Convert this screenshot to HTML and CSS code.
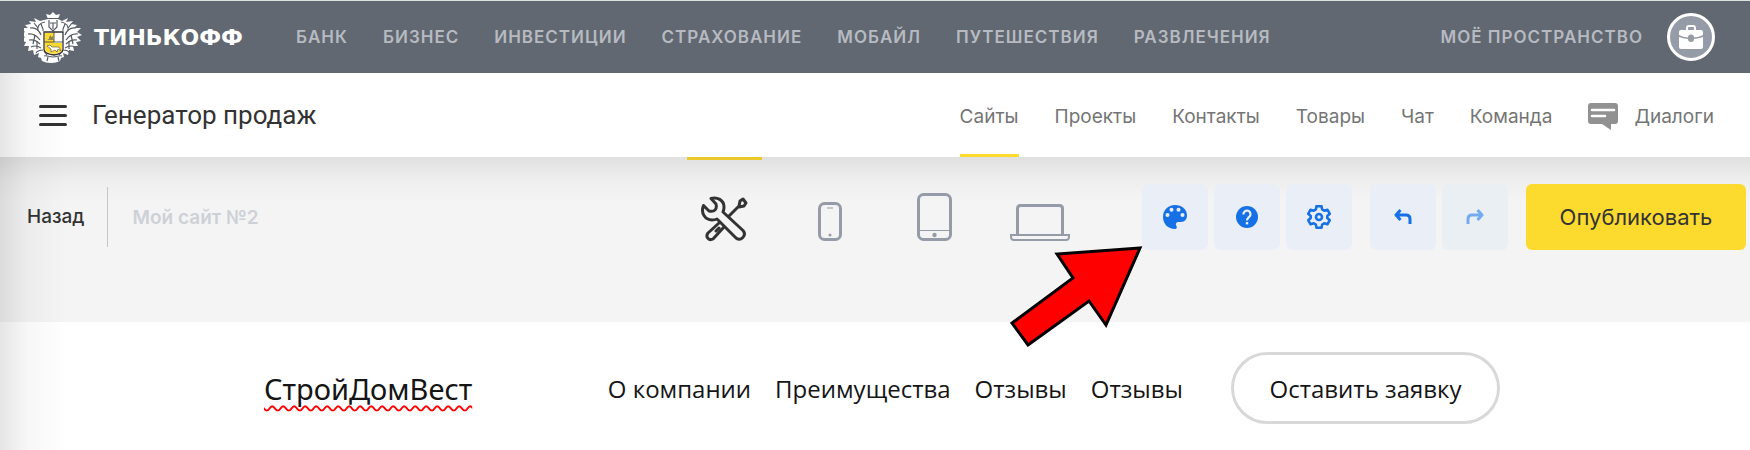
FILE: index.html
```html
<!DOCTYPE html>
<html lang="ru">
<head>
  <meta charset="UTF-8">
  <title>Генератор продаж</title>
  <link rel="stylesheet" href="styles.css">
</head>
<body>
  <!-- шапка -->
  <header class="topbar">
    <a class="brand" href="#">
      <svg class="crest" viewBox="0 0 58 52" aria-hidden="true">
        <!-- намёт и лента -->
        <path fill="#fff" d="M24 8 22 3l4 1 3-3 3 3 4-1-2 5 4 2 6-3-2 4 7-1-2 3 6 1-3 3 7 0-4 4 5 3-5 2 4 4-5 1 2 4-5 0 1 5-5-1-1 5-5-2 1 4-3 1-1 3c-3 1-5 2-9 2s-6-1-9-2l-1-3-3-1 1-4-5 2-1-5-5 1 1-5-5 0 2-4-5-1 4-4-5-2 5-3-4-4 7 0-3-3 6-1-2-3 7 1-2-4 6 3z"/>
        <g fill="none" stroke="#555b64" stroke-width="1.200">
          <path d="M23 7.500h12M25 9v7l4 4 4-4V9M26 12h6M29 12v6"/>
          <path d="M21 11c-5 1-8 4-7 9M37 11c5 1 8 4 7 9M17 12c0 4 3 5 2 8M41 12c0 4-3 5-2 8"/>
          <path d="M6 17c5-1 9 2 11 7M52 17c-5-1-9 2-11 7M4 23c6-1 9 2 12 6M54 23c-6-1-9 2-12 6"/>
          <path d="M5 29c5-1 8 1 11 4M53 29c-5-1-8 1-11 4M7 36c4-2 7-1 10 1M51 36c-4-2-7-1-10 1M12 42c2-3 4-3 7-3M46 42c-2-3-4-3-7-3"/>
          <path d="M10 12l4 5M48 12l-4 5M11 24l-2 9M47 24l2 9M13 30v8M45 30v8"/>
          <path d="M20 45c3-1 5 1 9 1s6-2 9-1M23 50l1-4M35 50l-1-4M20 40l3 4M38 40l-3 4"/>
        </g>
        <!-- щит -->
        <path fill="#fff" stroke="#333" stroke-width="1.300" d="M20 21h19v17c0 4-4 5-9 6-6-1-10-2-10-6z"/>
        <path fill="#fddb2e" d="M21 22h9v10h8v6c0 3-4 4-8 5-5-1-9-2-9-5z"/>
        <path fill="none" stroke="#333" stroke-width=".8" d="M20 31h19M30 21v10"/>
        <path fill="#8e8654" d="M23 29h7l-1-4-2 1 0-2-2 2 0 2z"/>
        <path fill="#fff" stroke="#6b6232" stroke-width=".7" d="M23 35l3-1 2 2h7l2 4-3-2-1 3-2-2-4 2 0-3z"/>
      </svg>
      <span class="brand-name">ТИНЬКОФФ</span>
    </a>
    <nav class="topnav">
      <a href="#">БАНК</a>
      <a href="#">БИЗНЕС</a>
      <a href="#">ИНВЕСТИЦИИ</a>
      <a href="#">СТРАХОВАНИЕ</a>
      <a href="#">МОБАЙЛ</a>
      <a href="#">ПУТЕШЕСТВИЯ</a>
      <a href="#">РАЗВЛЕЧЕНИЯ</a>
    </nav>
    <a class="space" href="#">
      <span>МОЁ ПРОСТРАНСТВО</span>
      <span class="avatar">
        <svg width="24" height="24" viewBox="0 0 24 24" aria-hidden="true">
          <path fill="none" stroke="#fff" stroke-width="2" d="M8 6V3q0-2 2-2h4q2 0 2 2v3"/>
          <path fill="#fff" d="M2 5h20q2 0 2 2v3q-4 2-9 2.500a3 3 0 0 0-6 0Q4 12 0 10V7q0-2 2-2z"/>
          <path fill="#fff" d="M0 12q4 1.500 9 2a3 3 0 0 0 6 0q5-.5 9-2v10q0 2-2 2H2q-2 0-2-2z"/>
        </svg>
      </span>
    </a>
  </header>

  <main class="app">
    <!-- меню раздела -->
    <div class="section-bar">
      <button class="burger" type="button" aria-label="Меню"><i></i><i></i><i></i></button>
      <h1>Генератор продаж</h1>
      <nav class="section-nav">
        <a class="active" href="#">Сайты</a>
        <a href="#">Проекты</a>
        <a href="#">Контакты</a>
        <a href="#">Товары</a>
        <a href="#">Чат</a>
        <a href="#">Команда</a>
        <a class="dialogs" href="#">
          <svg width="30" height="28" viewBox="0 0 30 28" aria-hidden="true">
            <path fill="#919191" d="M3 1h24q3 0 3 3v15q0 3-3 3h-4v6l-9-6H3q-3 0-3-3V4q0-3 3-3z"/>
            <path stroke="#fff" stroke-width="2.600" stroke-linecap="round" d="M4 8h22M4 14h13"/>
          </svg>
          Диалоги
        </a>
      </nav>
    </div>

    <!-- панель редактора -->
    <div class="toolbar">
      <a class="back" href="#">Назад</a>
      <input class="site-name" type="text" value="Мой сайт №2" aria-label="Название сайта">
      <div class="devices">
        <button class="active" type="button" aria-label="Редактор">
          <svg width="48" height="46" viewBox="0 0 48 46" fill="none" stroke="#333" stroke-width="3" stroke-linejoin="round" stroke-linecap="round" aria-hidden="true">
            <path d="M10 2.500C16 .5 23 4 23 11q0 3-1 5L42 34.500c4 5-2 11-7 7.500L16 23q-2 1-5 1C4 24-.5 17 2.500 9.500L8 15q4 1 6-1t1-6z"/>
            <path d="M18 27 7 37c-3 4 1 8 5 6l11-12M18 32l-3 3"/>
            <path d="M28 20 38 10M38 10l1-5 3-2 3 4-2 3-5 1z"/>
          </svg>
        </button>
        <button type="button" aria-label="Телефон">
          <svg width="24" height="40" viewBox="0 0 24 40" fill="none" stroke="#959ca7" aria-hidden="true">
            <rect x="1.500" y="1.500" width="21" height="36" rx="5" stroke-width="3"/>
            <path d="M9 6h6"/>
            <circle cx="12" cy="33" r="1.500" fill="#959ca7" stroke="none"/>
          </svg>
        </button>
        <button type="button" aria-label="Планшет">
          <svg width="35" height="49" viewBox="0 0 35 49" fill="none" stroke="#959ca7" aria-hidden="true">
            <rect x="1.500" y="1.500" width="32" height="45" rx="5" stroke-width="3"/>
            <path d="M2 37.500h31"/>
            <circle cx="17.500" cy="42" r="2.200" fill="#959ca7" stroke="none"/>
          </svg>
        </button>
        <button type="button" aria-label="Ноутбук">
          <svg width="60" height="38" viewBox="0 0 60 38" fill="none" stroke="#959ca7" aria-hidden="true">
            <path stroke-width="3" d="M7.500 31V4.500q0-3 3-3h39q3 0 3 3V31"/>
            <path stroke-width="2" d="M1 31h58v2q0 3-3 3H4q-3 0-3-3z"/>
          </svg>
        </button>
      </div>
      <div class="actions">
        <button class="tool" type="button" aria-label="Оформление">
          <svg width="24" height="24" viewBox="0 0 24 24" aria-hidden="true">
            <path fill="#1771e6" d="M12 0C5 0 0 5 0 12s5 12 12 12c2 0 2-2 1.500-3-1.500-2 0-4 2-4H18c4 0 6-3 6-6.500C24 4.500 19 0 12 0z"/>
            <g fill="#eaeff7"><circle cx="4.500" cy="10" r="2"/><circle cx="8.500" cy="4.800" r="2"/><circle cx="15.500" cy="4.800" r="2"/><circle cx="19.500" cy="10" r="2"/></g>
          </svg>
        </button>
        <button class="tool" type="button" aria-label="Помощь">
          <svg width="22" height="22" viewBox="0 0 22 22" aria-hidden="true">
            <circle cx="11" cy="11" r="11" fill="#1771e6"/>
            <path fill="none" stroke="#eaeff7" stroke-width="2.200" d="M7.500 8.500a3.500 3.500 0 1 1 5.800 2.200C12 12 11 12.500 11 14.500"/>
            <path fill="#eaeff7" d="M9.800 16h2.400v2.400H9.800z"/>
          </svg>
        </button>
        <button class="tool" type="button" aria-label="Настройки">
          <svg width="24" height="24" viewBox="0 0 24 24" fill="none" stroke="#1771e6" stroke-width="2.600" stroke-linejoin="round" aria-hidden="true">
            <path d="M9.500 1.200h5l.7 3.300 2 1.200 3.200-1 2.400 4.100-2.500 2.200v2l2.500 2.200-2.400 4.100-3.200-1-2 1.200-.7 3.300h-5l-.7-3.300-2-1.200-3.200 1-2.400-4.100L3.700 13v-2L1.200 8.800l2.400-4.100 3.200 1 2-1.200z"/>
            <circle cx="12" cy="12" r="3"/>
          </svg>
        </button>
        <button class="tool undo" type="button" aria-label="Отменить">
          <svg width="18" height="16" viewBox="0 0 18 16" fill="none" stroke="#1771e6" stroke-width="3" stroke-linejoin="round" aria-hidden="true">
            <path d="M6.500 1 2 6l4.500 5M2 6h10q4 0 4 4v5"/>
          </svg>
        </button>
        <button class="tool redo" type="button" aria-label="Повторить">
          <svg width="18" height="16" viewBox="0 0 18 16" fill="none" stroke="#75aaf0" stroke-width="3" stroke-linejoin="round" aria-hidden="true">
            <path d="M11.500 1 16 6l-4.500 5M16 6H6q-4 0-4 4v5"/>
          </svg>
        </button>
        <button class="publish" type="button">Опубликовать</button>
      </div>
      <svg class="pointer" width="134" height="102" viewBox="0 0 134 102" aria-hidden="true">
        <path fill="#f00" stroke="#000" stroke-width="3" d="M131 3 48 9l16 24L3 78l16 22 61-44 17 24z"/>
      </svg>
    </div>

    <!-- сайт клиента -->
    <section class="site">
      <span class="site-logo">СтройДомВест</span>
      <nav class="site-nav">
        <a href="#">О компании</a>
        <a href="#">Преимущества</a>
        <a href="#">Отзывы</a>
        <a href="#">Отзывы</a>
      </nav>
      <button class="request" type="button">Оставить заявку</button>
    </section>
  </main>
</body>
</html>
```

FILE: styles.css
```css
* {
  box-sizing:border-box;
}
body {
  margin:0;
  min-height:100vh;
  display:flex;
  flex-direction:column;
  font-family:Inter, "Liberation Sans", sans-serif;
  color:#333;
  background:#fff;
}
a {
  color:inherit;
  text-decoration:none;
}
button, input {
  font-family:inherit;
  color:inherit;
  border:0;
  padding:0;
  background:none;
}
button {
  cursor:pointer;
}
svg {
  display:block;
}

/* header */
.topbar {
  display:flex;
  align-items:center;
  height:73px;
  padding:0 35px 0 24px;
  border-top:1px solid #dfe3e0;
  background:#616871;
  color:#b7bbc1;
  font-size:17px;
  font-weight:600;
  letter-spacing:1px;
}
.brand {
  display:flex;
  align-items:center;
  gap:12px;
  width:237px;
  color:#fff;
}
.crest {
  width:58px;
  height:52px;
}
.brand-name {
  font-family:"DejaVu Sans", sans-serif;
  font-size:22px;
  font-weight:700;
  letter-spacing:0;
}
.topnav {
  display:flex;
  gap:35px;
  margin-left:35px;
}
.space {
  display:flex;
  align-items:center;
  gap:24px;
  margin-left:auto;
}
.avatar {
  display:flex;
  align-items:center;
  justify-content:center;
  width:48px;
  height:48px;
  border:3px solid #fff;
  border-radius:50%;
  background:#959ca7;
}

.app {
  position:relative;
  flex:1;
}
/* shadow along the left edge */
.app::before {
  content:"";
  position:absolute;
  top:0; bottom:0; left:0;
  z-index:1;
  width:68px;
  background:linear-gradient(to right, rgba(0,0,0,0.1), rgba(0,0,0,0.03) 40%, rgba(0,0,0,0));
  pointer-events:none;
}

/* section menu */
.section-bar {
  display:flex;
  align-items:center;
  height:84px;
  padding:0 36px 0 39px;
}
.burger {
  display:flex;
  flex-direction:column;
  gap:6px;
  width:28px;
}
.burger i {
  height:3px;
  border-radius:2px;
  background:#333;
}
.section-bar h1 {
  margin:0 0 0 25px;
  font-family:Roboto, sans-serif;
  font-size:26px;
  font-weight:400;
}
.section-nav {
  display:flex;
  align-self:stretch;
  gap:36px;
  margin-left:auto;
  font-size:19px;
  color:#757575;
}
.section-nav a {
  display:flex;
  align-items:center;
  padding-top:5px;
  border-bottom:3px solid transparent;
}
.section-nav .active {
  border-color:#fddb2e;
}
.section-nav .dialogs {
  gap:16px;
}

/* editor toolbar */
.toolbar {
  position:relative;
  display:flex;
  align-items:flex-start;
  height:165px;
  padding-right:4px;
  background:linear-gradient(#e0e0e0, #efefef 24px, #f4f4f4 45px);
}
.back {
  margin-top:30px;
  padding:0 23px 0 27px;
  border-right:1px solid #c4c6c9;
  font-size:19px;
  font-weight:500;
  line-height:60px;
}
.site-name {
  flex:1;
  min-width:0;
  height:60px;
  margin:30px 24px 0;
  font-size:19px;
  font-weight:600;
  color:#cdd1d7;
}
.devices {
  display:flex;
  gap:30px;
}
.devices button {
  display:flex;
  justify-content:center;
  align-items:flex-end;
  width:75px;
  height:85px;
  border-top:3px solid transparent;
}
.devices .active {
  border-color:#ecc92b;
}
.actions {
  display:flex;
  gap:6px;
  margin:27px 0 0 65px;
}
.tool {
  display:flex;
  align-items:center;
  justify-content:center;
  width:66px;
  height:66px;
  border-radius:6px;
  background:#eaeff7;
}
.undo {
  margin-left:12px;
}
.redo {
  background:#eaeff4;
}
.publish {
  width:220px;
  height:66px;
  margin-left:12px;
  border-radius:6px;
  background:#fddb2e;
  font-size:22px;
}
/* arrow drawn over the toolbar */
.pointer {
  position:absolute;
  right:607px;
  top:88px;
  z-index:1;
}

/* site preview */
.site {
  display:flex;
  align-items:center;
  padding:30px 250px 0 264px;
  font-family:"Open Sans", sans-serif;
  color:#151515;
}
.site-logo {
  font-family:"Noto Sans", sans-serif;
  font-size:29px;
  text-decoration:underline wavy #f00 2px;
  text-decoration-skip-ink:none;
  text-underline-offset:5px;
}
.site-nav {
  display:flex;
  gap:24px;
  margin:0 48px 0 auto;
  font-size:24px;
}
.request {
  width:269px;
  height:72px;
  border:3px solid #d8d8d8;
  border-radius:36px;
  font-size:24px;
}
```
